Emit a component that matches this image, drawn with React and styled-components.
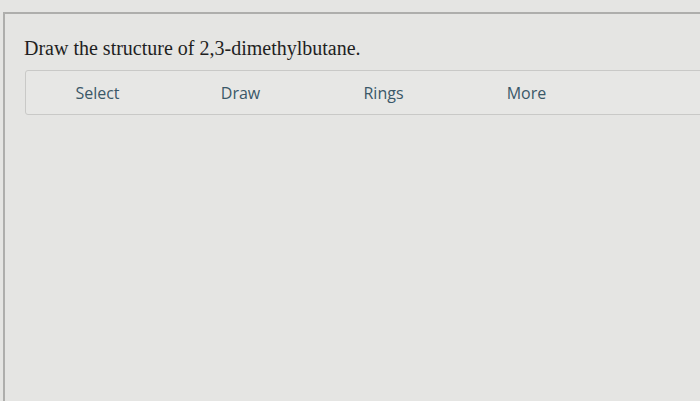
import styled, { createGlobalStyle } from "styled-components";

const Global = createGlobalStyle`
    html, body {
        margin: 0;
        padding: 0;
        background: #e5e5e3;
    }
    #root {
        height: 401px;
        overflow: hidden;
    }
`

const Page = styled.div`
    height: 100%;
    padding: 12px 0 0 3px;
    box-sizing: border-box;
    display: flex;
    flex-direction: column;
`

const Frame = styled.div`
    flex: 1;
    border-top: 2px solid #aeaeac;
    border-left: 2px solid #aeaeac;
    padding: 23px 0 0 19px;
    display: flex;
    flex-direction: column;
`

const Question = styled.h1`
    margin: 0;
    font-family: "Liberation Serif", "Times New Roman", serif;
    font-weight: normal;
    font-size: 20px;
    line-height: 23px;
    color: #1f1f1f;
`

const Toolbar = styled.div`
    margin-top: 10px;
    margin-left: 1px;
    margin-right: -20px;
    height: 45px;
    box-sizing: border-box;
    border: 1px solid #c9c9c7;
    border-radius: 3px;
    background: #e7e7e5;
    display: flex;
    align-items: center;
`

const Tool = styled.button`
    width: 143px;
    border: none;
    background: none;
    padding: 1px 0 0;
    font-family: "Open Sans", "Noto Sans", sans-serif;
    font-size: 16px;
    font-weight: 500;
    color: #3a5868;
    text-align: center;
    cursor: pointer;
`

const tools = ["Select", "Draw", "Rings", "More"];

const App = () => {
    return (
        <>
            <Global />
            <Page>
                <Frame>
                    <Question>Draw the structure of 2,3-dimethylbutane.</Question>
                    <Toolbar>
                        {tools.map((t) => (
                            <Tool key={t}>{t}</Tool>
                        ))}
                    </Toolbar>
                </Frame>
            </Page>
        </>
    );
}

export default App;
